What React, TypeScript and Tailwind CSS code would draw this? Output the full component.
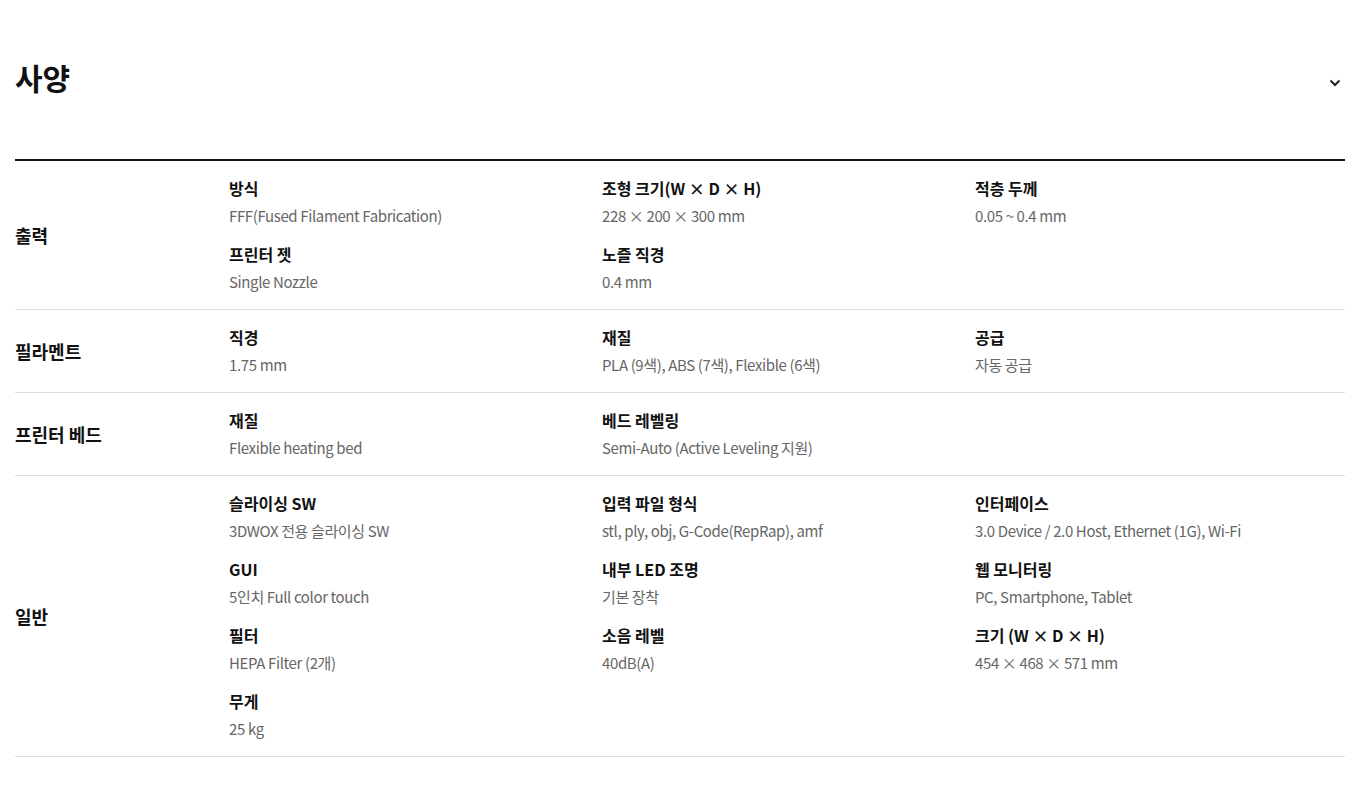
import React from 'react';

type Spec = { label: string; value: string };
type Group = { title: string; items: Spec[] };

const groups: Group[] = [
  {
    title: '출력',
    items: [
      { label: '방식', value: 'FFF(Fused Filament Fabrication)' },
      { label: '조형 크기(W × D × H)', value: '228 × 200 × 300 mm' },
      { label: '적층 두께', value: '0.05 ~ 0.4 mm' },
      { label: '프린터 젯', value: 'Single Nozzle' },
      { label: '노즐 직경', value: '0.4 mm' },
    ],
  },
  {
    title: '필라멘트',
    items: [
      { label: '직경', value: '1.75 mm' },
      { label: '재질', value: 'PLA (9색), ABS (7색), Flexible (6색)' },
      { label: '공급', value: '자동 공급' },
    ],
  },
  {
    title: '프린터 베드',
    items: [
      { label: '재질', value: 'Flexible heating bed' },
      { label: '베드 레벨링', value: 'Semi-Auto (Active Leveling 지원)' },
    ],
  },
  {
    title: '일반',
    items: [
      { label: '슬라이싱 SW', value: '3DWOX 전용 슬라이싱 SW' },
      { label: '입력 파일 형식', value: 'stl, ply, obj, G-Code(RepRap), amf' },
      { label: '인터페이스', value: '3.0 Device / 2.0 Host, Ethernet (1G), Wi-Fi' },
      { label: 'GUI', value: '5인치 Full color touch' },
      { label: '내부 LED 조명', value: '기본 장착' },
      { label: '웹 모니터링', value: 'PC, Smartphone, Tablet' },
      { label: '필터', value: 'HEPA Filter (2개)' },
      { label: '소음 레벨', value: '40dB(A)' },
      { label: '크기 (W × D × H)', value: '454 × 468 × 571 mm' },
      { label: '무게', value: '25 kg' },
    ],
  },
];

function SpecRow({ group }: { group: Group }) {
  return (
    <div className="flex items-center border-b border-[#dddddd] py-[15px]">
      <div className="w-[214px] shrink-0 text-[18px] font-bold leading-[26px] text-[#111]">{group.title}</div>
      <div className="grid flex-1 grid-cols-[373px_373px_1fr] gap-y-[14px]">
        {group.items.map((item, i) => (
          <div key={i}>
            <div className="text-[16px] font-bold leading-[24px] text-[#111]">{item.label}</div>
            <div className="mt-1 text-[15px] leading-[24px] tracking-[-0.025em] text-[#666]">{item.value}</div>
          </div>
        ))}
      </div>
    </div>
  );
}

export default function App() {
  return (
    <div
      className="min-h-[810px] bg-white px-[15px]"
      style={{ fontFamily: '"Noto Sans CJK KR", "Noto Sans", sans-serif' }}
    >
      <div className="flex items-center justify-between pt-[57px] pb-[62px]">
        <h2 className="text-[30px] font-bold leading-[40px] text-[#111]">사양</h2>
        <svg width="12" height="8" viewBox="0 0 12 8" className="mr-[4px] mt-[12px]">
          <polyline points="1.5,1.5 6,6 10.5,1.5" fill="none" stroke="#222" strokeWidth="2" />
        </svg>
      </div>
      <div className="border-t-2 border-[#111]">
        {groups.map((g, i) => (
          <SpecRow key={i} group={g} />
        ))}
      </div>
    </div>
  );
}
